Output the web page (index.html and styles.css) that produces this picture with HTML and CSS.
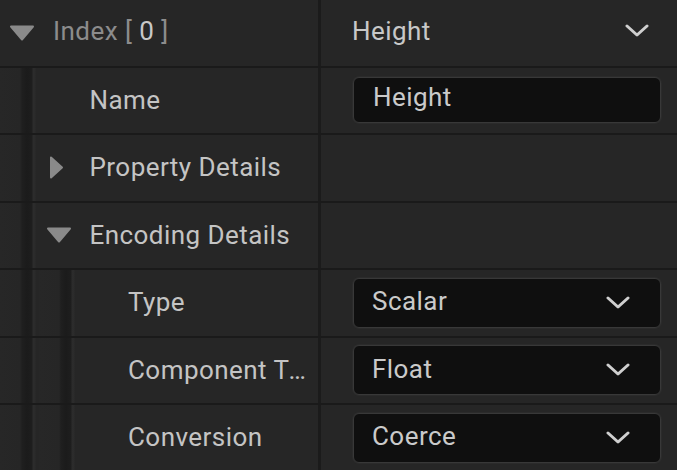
FILE: index.html
```html
<!DOCTYPE html>
<html>
<head>
<meta charset="utf-8">
<link rel="stylesheet" href="styles.css">
</head>
<body>
<div class="panel">
  <div class="row">
    <div class="name-cell">
      <div class="name-content lvl0">
        <svg class="tri" width="26" height="16" viewBox="0 0 26 16"><path d="M2 1.5 H24 L13 14.5 Z" fill="#8a8a8a" stroke="#8a8a8a" stroke-width="2" stroke-linejoin="round"/></svg>
        <span class="label dim">Index [ <span class="idx">0</span> ]</span>
      </div>
    </div>
    <div class="value-cell">
      <div class="combo-plain">
        <span class="val">Height</span>
        <svg class="chev" width="24" height="14" viewBox="0 0 24 14"><path d="M2 2 L12 11 L22 2" fill="none" stroke="#cfcfcf" stroke-width="3" stroke-linecap="round" stroke-linejoin="round"/></svg>
      </div>
    </div>
  </div>

  <div class="row">
    <div class="name-cell">
      <div class="indent"></div>
      <div class="name-content lvl">
        <span class="label">Name</span>
      </div>
    </div>
    <div class="value-cell">
      <div class="box"><span class="val">Height</span></div>
    </div>
  </div>

  <div class="row">
    <div class="name-cell">
      <div class="indent"></div>
      <div class="name-content lvl">
        <svg class="tri tri-r" width="26" height="26" viewBox="0 0 26 26"><path d="M7 2.5 V22.5 L18 12.5 Z" fill="#8a8a8a" stroke="#8a8a8a" stroke-width="2" stroke-linejoin="round"/></svg>
        <span class="label">Property Details</span>
      </div>
    </div>
    <div class="value-cell"></div>
  </div>

  <div class="row">
    <div class="name-cell">
      <div class="indent"></div>
      <div class="name-content lvl">
        <svg class="tri" width="26" height="16" viewBox="0 0 26 16"><path d="M2 1.5 H24 L13 14.5 Z" fill="#8a8a8a" stroke="#8a8a8a" stroke-width="2" stroke-linejoin="round"/></svg>
        <span class="label">Encoding Details</span>
      </div>
    </div>
    <div class="value-cell"></div>
  </div>

  <div class="row">
    <div class="name-cell">
      <div class="indent"></div>
      <div class="indent"></div>
      <div class="name-content lvl">
        <span class="label">Type</span>
      </div>
    </div>
    <div class="value-cell">
      <div class="box combo"><span class="val">Scalar</span>
        <svg class="chev" width="24" height="14" viewBox="0 0 24 14"><path d="M2 2 L12 11 L22 2" fill="none" stroke="#cfcfcf" stroke-width="3" stroke-linecap="round" stroke-linejoin="round"/></svg>
      </div>
    </div>
  </div>

  <div class="row">
    <div class="name-cell">
      <div class="indent"></div>
      <div class="indent"></div>
      <div class="name-content lvl">
        <span class="label">Component Type</span>
      </div>
    </div>
    <div class="value-cell">
      <div class="box combo"><span class="val">Float</span>
        <svg class="chev" width="24" height="14" viewBox="0 0 24 14"><path d="M2 2 L12 11 L22 2" fill="none" stroke="#cfcfcf" stroke-width="3" stroke-linecap="round" stroke-linejoin="round"/></svg>
      </div>
    </div>
  </div>

  <div class="row">
    <div class="name-cell">
      <div class="indent"></div>
      <div class="indent"></div>
      <div class="name-content lvl">
        <span class="label">Conversion</span>
      </div>
    </div>
    <div class="value-cell">
      <div class="box combo"><span class="val">Coerce</span>
        <svg class="chev" width="24" height="14" viewBox="0 0 24 14"><path d="M2 2 L12 11 L22 2" fill="none" stroke="#cfcfcf" stroke-width="3" stroke-linecap="round" stroke-linejoin="round"/></svg>
      </div>
    </div>
  </div>
</div>
</body>
</html>
```

FILE: styles.css
```css
html, body {
  margin: 0;
  padding: 0;
  background: #252525;
  overflow: hidden;
}
body {
  font-family: Roboto, "Liberation Sans", sans-serif;
  font-size: 26px;
  letter-spacing: 0.45px;
  color: #c4c4c4;
}
.panel {
  width: 677px;
  height: 470px;
  display: flex;
  flex-direction: column;
}
.row {
  display: grid;
  grid-template-columns: 321px 1fr;
  height: 65.5px;
  flex: none;
  border-bottom: 2px solid #1a1a1a;
  background: #262626;
}
.name-cell {
  display: flex;
  border-right: 3px solid #1b1b1b;
  min-width: 0;
}
.indent {
  width: 38.5px;
  flex: none;
  background: linear-gradient(to right,
    #272727 0px, #262626 20px,
    #1f1f1f 22px, #1b1b1b 27px, #1e1e1e 32px,
    #2c2c2c 33px, #2b2b2b 35px, #262626 36px);
}
.name-content {
  flex: 1;
  min-width: 0;
  display: flex;
  align-items: center;
  position: relative;
}
.name-content.lvl0 {
  padding-left: 53px;
}
.name-content.lvl {
  padding-left: 51px;
  padding-right: 8px;
}
.tri {
  position: absolute;
  left: 9px;
  top: 50%;
  transform: translateY(-50%);
}
.lvl .tri {
  left: 7px;
}
.lvl .tri-r {
  left: 5px;
}
.label {
  white-space: nowrap;
  overflow: hidden;
  text-overflow: ellipsis;
  min-width: 0;
  margin-top: -1px;
}
.lvl0 .label {
  margin-top: -4px;
}
.dim {
  color: #8c8c8c;
}
.idx {
  color: #c8c8c8;
}
.value-cell {
  display: flex;
  align-items: center;
  padding-left: 32px;
  padding-right: 16px;
}
.combo-plain {
  flex: 1;
  display: flex;
  align-items: center;
  justify-content: space-between;
  padding-right: 12px;
  margin-top: -4px;
}
.combo-plain .val {
  margin-left: -1px;
  color: #c8c8c8;
}
.box {
  flex: 1;
  height: 46px;
  box-sizing: border-box;
  background: #0f0f0f;
  border: 1px solid #383838;
  box-shadow: 0 0 0 1px #2b2b2b;
  border-radius: 6px;
  display: flex;
  align-items: center;
  padding-left: 19px;
  padding-right: 30px;
}
.box .val {
  margin-top: -7px;
  color: #cacaca;
}
.combo {
  justify-content: space-between;
  height: 50px;
  padding-left: 18px;
}
.combo .val {
  margin-top: -3px;
}
.chev {
  flex: none;
}
```
